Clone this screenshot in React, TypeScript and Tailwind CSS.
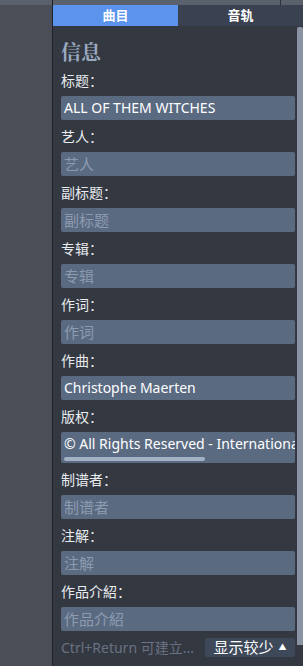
import React from 'react';

const fields: { label: string; value?: string; placeholder: string }[] = [
  { label: '标题：', value: 'ALL OF THEM WITCHES', placeholder: '标题' },
  { label: '艺人：', placeholder: '艺人' },
  { label: '副标题：', placeholder: '副标题' },
  { label: '专辑：', placeholder: '专辑' },
  { label: '作词：', placeholder: '作词' },
  { label: '作曲：', value: 'Christophe Maerten', placeholder: '作曲' },
  { label: '版权：', value: '© All Rights Reserved - International Copyright Secured', placeholder: '版权' },
  { label: '制谱者：', placeholder: '制谱者' },
  { label: '注解：', placeholder: '注解' },
  { label: '作品介紹：', placeholder: '作品介紹' },
];

const font = "font-['Noto_Sans','Noto_Sans_CJK_SC',sans-serif]";

export default function App() {
  return (
    <div className={`flex h-[666px] w-[303px] overflow-hidden bg-[#4b4e56] ${font}`}>
      {/* 左侧区域 */}
      <div className="flex w-[52px] shrink-0 flex-col">
        <div className="h-[5px] bg-[#5a606c]" />
        <div className="flex-1 bg-[#4b4e56]" />
      </div>
      <div className="w-px shrink-0 bg-[#1f2228]" />

      {/* 右侧面板 */}
      <div className="flex min-w-0 flex-1 flex-col">
        <div className="flex h-[5px] shrink-0 bg-[#5a606c]">
          <div className="flex-1" />
          <div className="w-px bg-[#2a2e36]" />
          <div className="w-[22px]" />
        </div>
        <div className="flex h-[21px] shrink-0 text-[13px] font-bold text-white">
          <div className="flex w-[125px] items-center justify-center bg-[#5c93ec]">曲目</div>
          <div className="flex flex-1 items-center justify-center bg-[#3a4150]">音轨</div>
        </div>

        <div className="flex min-h-0 flex-1 bg-[#343841]">
          <div className="flex min-w-0 flex-1 flex-col pl-[8px] pr-[1px] pt-[14px]">
            <h2 className="h-[24px] font-['Noto_Serif_CJK_SC','Noto_Sans_CJK_SC',serif] text-[20px] font-bold leading-[24px] text-[#9aa9bf]">
              信息
            </h2>
            <div className="flex flex-col">
              {fields.map((f) => (
                <div key={f.label} className="flex flex-col">
                  <div className="mb-[5px] mt-[7px] h-[20px] text-[14px] leading-[20px] text-[#e8ebef]">{f.label}</div>
                  {f.label === '版权：' ? (
                    <div className="flex h-[31px] flex-col overflow-hidden rounded-[2px] bg-[#5a6a81]">
                      <div className="h-[24px] overflow-hidden whitespace-nowrap px-[3px] text-[14px] leading-[24px] text-white">
                        {f.value}
                      </div>
                      <div className="ml-[3px] mt-[1px] h-[4px] w-[141px] rounded-full bg-[#a3b1c4]" />
                    </div>
                  ) : (
                    <div
                      className={`h-[24px] overflow-hidden whitespace-nowrap rounded-[2px] bg-[#5a6a81] px-[3px] leading-[24px] ${
                        f.value ? 'text-[14px] text-white' : 'text-[15px] text-[#8d9bb0]'
                      }`}
                    >
                      {f.value ?? f.placeholder}
                    </div>
                  )}
                </div>
              ))}
            </div>
            <div className="mt-[6px] flex h-[20px] items-center justify-between">
              <span className="whitespace-nowrap text-[14px] text-[#697283]">Ctrl+Return 可建立...</span>
              <button className="flex h-[19px] w-[90px] items-center justify-center gap-[5px] rounded-[2px] bg-[#3d4859] text-[15px] text-white">
                显示较少
                <span className="text-[8px]">▲</span>
              </button>
            </div>
          </div>
          {/* 滚动条 */}
          <div className="flex w-[7px] shrink-0 flex-col pb-[21px] pt-[1px]">
            <div className="ml-[1px] flex-1 rounded-t-[2px] bg-[#8a93a3]" />
          </div>
        </div>
      </div>
    </div>
  );
}
